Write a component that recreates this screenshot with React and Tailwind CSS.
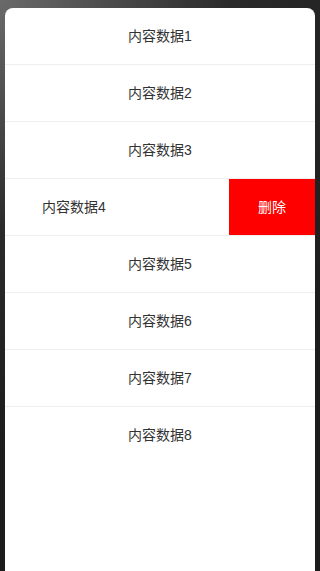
const ITEMS = [1, 2, 3, 4, 5, 6, 7, 8]

function Row({ n, open }) {
  return (
    <div className={`flex overflow-hidden ${n < ITEMS.length ? 'border-b border-[#eeeeee]' : ''}`}>
      <div className={`w-full shrink-0 h-[56px] flex items-center justify-center text-[14px] text-[#333333] ${open ? '-ml-[86px]' : ''}`}>
        内容数据{n}
      </div>
      {open && (
        <button className="w-[86px] shrink-0 h-[56px] bg-[#ff0000] text-white text-[14px] flex items-center justify-center">
          删除
        </button>
      )}
    </div>
  )
}

export default function App() {
  return (
    <div className="w-[320px] h-[571px] overflow-hidden bg-[radial-gradient(circle_at_0%_0%,#6a6a6a_0%,#2a2a2a_35%,#1c1c1c_70%)] pt-[8px] px-[5px] font-['Liberation_Sans','Noto_Sans_CJK_SC',sans-serif]">
      <div className="h-[563px] bg-white rounded-t-[8px] overflow-hidden">
        {ITEMS.map((n) => (
          <Row key={n} n={n} open={n === 4} />
        ))}
      </div>
    </div>
  )
}
